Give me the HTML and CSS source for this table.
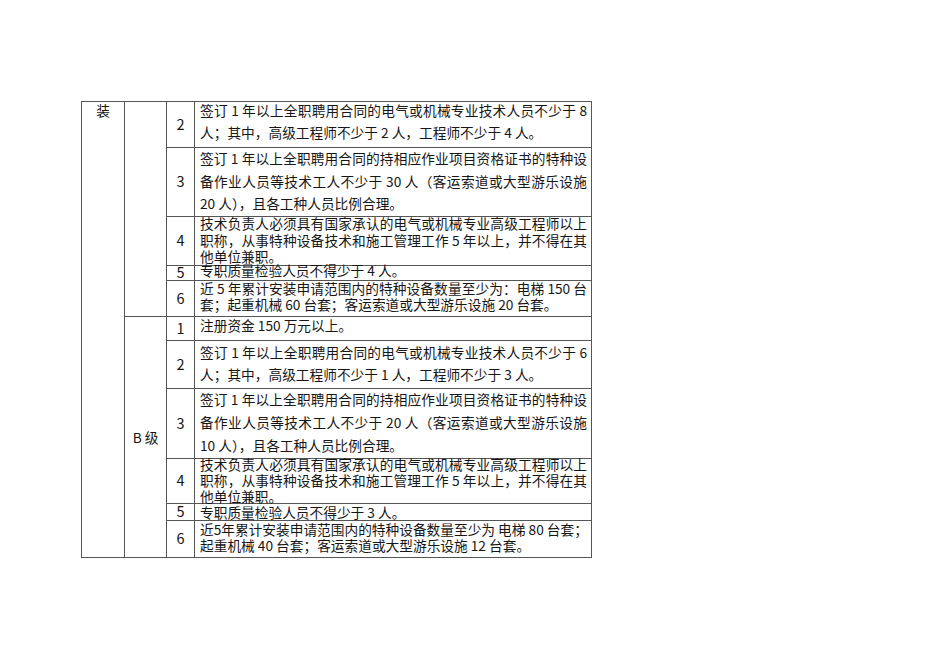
FILE: index.html
```html
<!DOCTYPE html>
<html lang="zh">
<head>
<meta charset="utf-8">
<title>资格条件</title>
<link rel="stylesheet" href="styles.css">
</head>
<body>
<div class="page">
  <div class="tbl">
    <div class="c1">装</div>
    <div class="c2 a"></div>
    <div class="c2 b"><span>B 级</span></div>

    <div class="num">2</div>
    <div class="txt"><div class="ln ta2">
      <div class="j">签订 1 年以上全职聘用合同的电气或机械专业技术人员不少于 8</div>
      <div>人；其中，高级工程师不少于 2 人，工程师不少于 4 人。</div>
    </div></div>

    <div class="num">3</div>
    <div class="txt"><div class="ln ta3">
      <div class="j">签订 1 年以上全职聘用合同的持相应作业项目资格证书的特种设</div>
      <div class="j">备作业人员等技术工人不少于 30 人（客运索道或大型游乐设施</div>
      <div>20 人），且各工种人员比例合理。</div>
    </div></div>

    <div class="num">4</div>
    <div class="txt"><div class="ln ta4">
      <div class="j">技术负责人必须具有国家承认的电气或机械专业高级工程师以上</div>
      <div class="j">职称，从事特种设备技术和施工管理工作 5 年以上，并不得在其</div>
      <div>他单位兼职。</div>
    </div></div>

    <div class="num">5</div>
    <div class="txt"><div class="ln ta5">
      <div>专职质量检验人员不得少于 4 人。</div>
    </div></div>

    <div class="num">6</div>
    <div class="txt"><div class="ln ta6">
      <div class="j">近 5 年累计安装申请范围内的特种设备数量至少为：电梯 150 台</div>
      <div>套；起重机械 60 台套；客运索道或大型游乐设施 20 台套。</div>
    </div></div>

    <div class="num">1</div>
    <div class="txt"><div class="ln tb1">
      <div>注册资金 150 万元以上。</div>
    </div></div>

    <div class="num">2</div>
    <div class="txt"><div class="ln tb2">
      <div class="j">签订 1 年以上全职聘用合同的电气或机械专业技术人员不少于 6</div>
      <div>人；其中，高级工程师不少于 1 人，工程师不少于 3 人。</div>
    </div></div>

    <div class="num">3</div>
    <div class="txt"><div class="ln tb3">
      <div class="j">签订 1 年以上全职聘用合同的持相应作业项目资格证书的特种设</div>
      <div class="j">备作业人员等技术工人不少于 20 人（客运索道或大型游乐设施</div>
      <div>10 人），且各工种人员比例合理。</div>
    </div></div>

    <div class="num">4</div>
    <div class="txt"><div class="ln tb4">
      <div class="j">技术负责人必须具有国家承认的电气或机械专业高级工程师以上</div>
      <div class="j">职称，从事特种设备技术和施工管理工作 5 年以上，并不得在其</div>
      <div>他单位兼职。</div>
    </div></div>

    <div class="num">5</div>
    <div class="txt"><div class="ln tb5">
      <div>专职质量检验人员不得少于 3 人。</div>
    </div></div>

    <div class="num">6</div>
    <div class="txt"><div class="ln tb6">
      <div class="j">近5年累计安装申请范围内的特种设备数量至少为 电梯 80 台套；</div>
      <div>起重机械 40 台套；客运索道或大型游乐设施 12 台套。</div>
    </div></div>
  </div>
</div>
</body>
</html>
```

FILE: styles.css
```css
html, body {
  margin: 0;
  padding: 0;
  background: #ffffff;
}

.page {
  padding: 101px 0 0 81px;
  font-family: "Noto Sans CJK SC", "Noto Sans", sans-serif;
  font-size: 13.7px;
  color: #161616;
}

.tbl {
  display: grid;
  width: 511px;
  box-sizing: border-box;
  grid-template-columns: 43px 42px 28px 397px;
  grid-template-rows: 46px 69px 49px 15px 36px 24px 48px 70px 45px 17px 37px;
  border-top: 1px solid #555;
  border-left: 1px solid #555;
}

.tbl > div {
  box-sizing: border-box;
  border-right: 1px solid #555;
  border-bottom: 1px solid #555;
  min-height: 0;
  min-width: 0;
}

.c1 {
  grid-column: 1;
  grid-row: 1 / span 11;
  text-align: center;
  line-height: 17px;
  padding-top: 0;
}

.c2 {
  grid-column: 2;
}

.c2.a {
  grid-row: 1 / span 5;
}

.c2.b {
  grid-row: 6 / span 6;
  display: flex;
  align-items: center;
  justify-content: center;
}

.num {
  grid-column: 3;
  display: flex;
  align-items: center;
  justify-content: center;
  line-height: 14px;
  font-size: 14.5px;
  padding-bottom: 2px;
}

.txt {
  grid-column: 4;
  padding: 0 4px 0 5px;
}

.ln > div {
  white-space: nowrap;
}

.ln .j {
  text-align: justify;
  text-align-last: justify;
}

.ta2 { line-height: 22px; margin-top: -3px; }
.ta3 { line-height: 22.5px; margin-top: -1px; }
.ta4 { line-height: 16.5px; margin-top: -2px; }
.ta5 { line-height: 16px; margin-top: -4px; }
.ta6 { line-height: 16px; margin-top: -1px; }

.tb1 { line-height: 17px; margin-top: 0; }
.tb2 { line-height: 22px; margin-top: 0; }
.tb3 { line-height: 23px; margin-top: -1.5px; }
.tb4 { line-height: 16px; margin-top: -3px; }
.tb5 { line-height: 16px; margin-top: -0.5px; }
.tb6 { line-height: 16px; margin-top: 0; }
```
